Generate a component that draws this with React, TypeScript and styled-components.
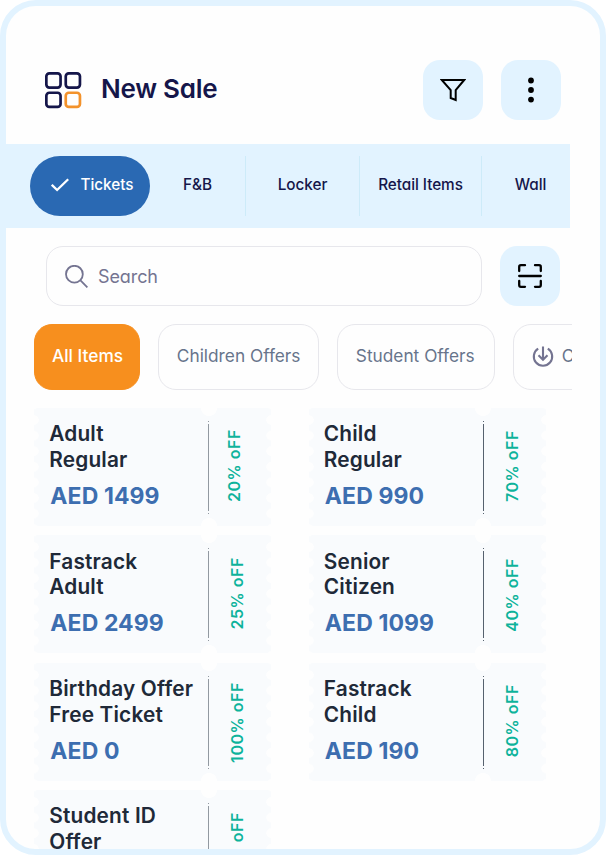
import React from "react";
import styled, { createGlobalStyle } from "styled-components";

const GlobalStyle = createGlobalStyle`
  *, *::before, *::after { box-sizing: border-box; }
  body { margin: 0; background: #fff; }
  button { border: 0; margin: 0; padding: 0; background: none; font: inherit; color: inherit; }
`;

const Frame = styled.main`
  width: 606px;
  height: 855px;
  border: 6px solid #e2f3ff;
  border-radius: 36px;
  background: #fefefe;
  overflow: hidden;
  font-family: Inter, "Liberation Sans", sans-serif;
  font-feature-settings: "cv11", "ss03";
`;

const Header = styled.header`
  display: flex;
  align-items: center;
  height: 138px;
  padding: 30px 39px 0 39px;
  gap: 18px;
`;

const HeaderInner = styled.div`
  display: flex;
  align-items: center;
  flex: 1;
  gap: 19px;
`;

const Title = styled.h1`
  margin: 0 0 3px;
  font-size: 26px;
  line-height: 30px;
  font-weight: 600;
  color: #15164a;
  white-space: nowrap;
  letter-spacing: -0.25px;
`;

const IconButton = styled.button`
  display: grid;
  place-items: center;
  flex: none;
  width: 60px;
  height: 60px;
  border-radius: 17px;
  background: #e2f3ff;
`;

const Tabs = styled.nav`
  display: grid;
  grid-template-columns: 120px 96px 114px 122px 97px;
  align-items: center;
  width: 564px;
  height: 84px;
  padding-left: 24px;
  background: #e2f3ff;
  overflow: hidden;
`;

const Tab = styled.button<{ $active?: boolean; $divided?: boolean }>`
  display: flex;
  align-items: center;
  justify-content: center;
  gap: 12px;
  height: 60px;
  padding: 0 0 3px ${(p) => (p.$active ? "4px" : "0")};
  border-radius: ${(p) => (p.$active ? "30px" : "0")};
  border-right: ${(p) => (p.$divided ? "1px solid #cdebf9" : "0")};
  background: ${(p) => (p.$active ? "#2a69b3" : "transparent")};
  color: ${(p) => (p.$active ? "#fff" : "#15164a")};
  font-size: 15.3px;
  font-weight: 500;
  letter-spacing: -0.05px;
  white-space: nowrap;
`;

const SearchRow = styled.div`
  display: flex;
  gap: 18px;
  padding: 18px 0 0 40px;
`;

const SearchField = styled.label`
  display: flex;
  align-items: center;
  gap: 10px;
  width: 436px;
  height: 60px;
  padding-left: 18px;
  border: 1px solid #e7e7ec;
  border-radius: 17px;
  color: #747491;
  font-size: 18px;
  letter-spacing: -0.1px;
`;

const Chips = styled.div`
  display: flex;
  gap: 18px;
  width: 566px;
  margin-top: 18px;
  padding-left: 28px;
  overflow: hidden;
`;

const Chip = styled.button<{ $width: number; $active?: boolean }>`
  display: flex;
  align-items: center;
  flex: none;
  gap: 8px;
  width: ${(p) => p.$width}px;
  height: 66px;
  padding: 0 0 3px ${(p) => (p.$active ? "17px" : "17.8px")};
  border: 1px solid ${(p) => (p.$active ? "#f78f1e" : "#e7e7ec")};
  border-radius: 18px;
  background: ${(p) => (p.$active ? "#f78f1e" : "transparent")};
  color: ${(p) => (p.$active ? "#fff" : "#67748b")};
  font-size: 17.3px;
  font-weight: ${(p) => (p.$active ? 500 : 400)};
  white-space: nowrap;
`;

const TicketGrid = styled.section`
  display: grid;
  grid-template-columns: 237px 237px;
  grid-auto-rows: 118px;
  gap: 9.4px 37.5px;
  padding: 18px 0 0 28px;
  font-feature-settings: normal;
`;

const TicketCard = styled.article`
  display: grid;
  grid-template-columns: 174px 63px;
  background:
    radial-gradient(circle at 0 50%, #fefefe 4.4px, transparent 5px) 0 4.2px / 10px 15.6px repeat-y,
    radial-gradient(circle at 100% 50%, #fefefe 4.4px, transparent 5px) 100% 4.2px / 10px 15.6px repeat-y,
    radial-gradient(circle at 50% 0, #fefefe 7.7px, transparent 8.3px) 165.7px 0 / 18px 10px no-repeat,
    radial-gradient(circle at 50% 100%, #fefefe 7.7px, transparent 8.3px) 165.7px 100% / 18px 10px no-repeat,
    #f9fbfd;
`;

const TicketInfo = styled.div`
  padding: 13.3px 0 0 15.3px;
  white-space: nowrap;
`;

const TicketName = styled.h2`
  margin: 0;
  color: #202938;
  font-size: 20.8px;
  line-height: 25.5px;
  font-weight: 560;
  letter-spacing: 0.18px;
`;

const Price = styled.p`
  margin: 9.5px 0 0 1px;
  color: #3d6eb0;
  font-size: 23px;
  line-height: 28px;
  font-weight: 700;
  letter-spacing: 0.1px;
`;

/* The divider is a solid rule with a small dot at each end. */
const Stub = styled.div<{ $dark: boolean }>`
  --rule: ${(p) => (p.$dark ? "#56616e" : "#9299a1")};
  display: flex;
  align-items: center;
  justify-content: center;
  height: 93px;
  margin-top: 13px;
  padding-right: 11px;
  background: linear-gradient(
      var(--rule) 0 1px, transparent 1px 3px, var(--rule) 3px 90px,
      transparent 90px 92px, var(--rule) 92px
    ) 0 0 / 1px 100% no-repeat;
`;

const Discount = styled.span<{ $shiftX: number; $shiftY: number }>`
  writing-mode: vertical-rl;
  transform: translate(${(p) => p.$shiftX}px, ${(p) => p.$shiftY}px) rotate(180deg);
  color: #0eb39b;
  font-size: 16px;
  line-height: 20px;
  font-weight: 600;
  letter-spacing: 0.55px;
  white-space: nowrap;
`;

const GridIcon = () => (
  <svg width="37" height="37" viewBox="0 0 37 37" fill="none" stroke="#15164a" strokeWidth="2.7">
    <rect x="1.35" y="1.35" width="14.2" height="14.2" rx="3" />
    <rect x="20.75" y="1.35" width="14.2" height="14.2" rx="3" />
    <rect x="1.35" y="20.75" width="14.2" height="14.2" rx="3" />
    <rect x="20.75" y="20.75" width="14.2" height="14.2" rx="3" stroke="#f3922b" />
  </svg>
);

const FilterIcon = () => (
  <svg width="26" height="24" viewBox="0 0 26 24" fill="none" stroke="#000" strokeWidth="2">
    <path d="M1.8 2H24.2L15.7 12.2V22L10.7 20V12.2Z" />
  </svg>
);

const MoreIcon = () => (
  <svg width="6" height="26" viewBox="0 0 6 26">
    <circle cx="3" cy="3.5" r="2.9" />
    <circle cx="3" cy="13" r="2.9" />
    <circle cx="3" cy="22.6" r="2.9" />
  </svg>
);

const CheckIcon = () => (
  <svg width="18" height="14" viewBox="0 0 18 14" fill="none" stroke="#fff" strokeWidth="2.3">
    <path d="M.8 6.8 6.1 12 17.2 1.2" />
  </svg>
);

const SearchIcon = () => (
  <svg width="23" height="23" viewBox="0 0 23 23" fill="none" stroke="#747491" strokeWidth="1.8">
    <circle cx="9.4" cy="9.2" r="8.4" />
    <path d="m15.2 15.2 7.2 7.2" />
  </svg>
);

const ScanIcon = () => (
  <svg width="24" height="24" viewBox="0 0 24 24" fill="none" stroke="#000" strokeWidth="2.3" strokeLinecap="round">
    <path d="M1.2 7V2.9Q1.2 1.2 2.9 1.2H7M17 1.2h4.1q1.7 0 1.7 1.7V7M22.8 17v4.1q0 1.7-1.7 1.7H17M7 22.8H2.9Q1.2 22.8 1.2 21.1V17M1.2 12H22.8" />
  </svg>
);

const DownloadIcon = () => (
  <svg width="22" height="22" viewBox="0 0 22 22" fill="none" stroke="#747491" strokeWidth="2.1">
    <path d="M6.2 3.7a9.2 9.2 0 1 0 9.6 0M11 1.5V14.5M6.5 10.2 11 14.7l4.5-4.5" />
  </svg>
);

const tickets = [
  { name: ["Adult", "Regular"], price: "AED 1499", off: "20% oFF", x: 0, y: -2 },
  { name: ["Child", "Regular"], price: "AED 990", off: "70% oFF", x: 3, y: -1 },
  { name: ["Fastrack", "Adult"], price: "AED 2499", off: "25% oFF", x: 3, y: -2 },
  { name: ["Senior", "Citizen"], price: "AED 1099", off: "40% oFF", x: 3, y: 0 },
  { name: ["Birthday Offer", "Free Ticket"], price: "AED 0", off: "100% oFF", x: 3, y: 0 },
  { name: ["Fastrack", "Child"], price: "AED 190", off: "80% oFF", x: 3, y: -2 },
  { name: ["Student ID", "Offer"], price: "AED 0", off: "50% oFF", x: 3, y: -1 },
];

export default function App() {
  return (
    <>
      <GlobalStyle />
      <Frame>
        <Header>
          <HeaderInner>
            <GridIcon />
            <Title>New Sale</Title>
          </HeaderInner>
          <IconButton aria-label="Filter"><FilterIcon /></IconButton>
          <IconButton aria-label="More"><MoreIcon /></IconButton>
        </Header>
        <Tabs>
          <Tab $active><CheckIcon />Tickets</Tab>
          <Tab $divided>F&amp;B</Tab>
          <Tab $divided>Locker</Tab>
          <Tab $divided>Retail Items</Tab>
          <Tab>Wall</Tab>
        </Tabs>
        <SearchRow>
          <SearchField><SearchIcon />Search</SearchField>
          <IconButton aria-label="Scan"><ScanIcon /></IconButton>
        </SearchRow>
        <Chips>
          <Chip $width={106} $active>All Items</Chip>
          <Chip $width={161}>Children Offers</Chip>
          <Chip $width={158}>Student Offers</Chip>
          <Chip $width={161}><DownloadIcon />Combos</Chip>
        </Chips>
        <TicketGrid>
          {tickets.map((t, i) => (
            <TicketCard key={i}>
              <TicketInfo>
                <TicketName>{t.name[0]}<br />{t.name[1]}</TicketName>
                <Price>{t.price}</Price>
              </TicketInfo>
              <Stub $dark={i % 2 === 1}>
                <Discount $shiftX={t.x} $shiftY={t.y}>{t.off}</Discount>
              </Stub>
            </TicketCard>
          ))}
        </TicketGrid>
      </Frame>
    </>
  );
}
